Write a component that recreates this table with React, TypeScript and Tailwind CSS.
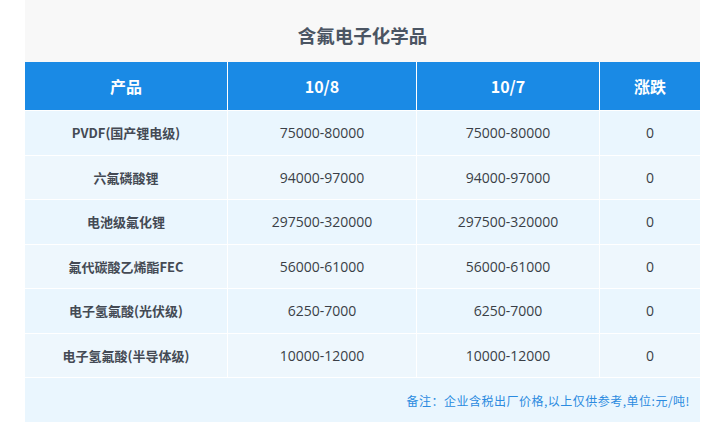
import React from "react";

type Row = { name: string; d1: string; d2: string; change: string };

const rows: Row[] = [
  { name: "PVDF(国产锂电级)", d1: "75000-80000", d2: "75000-80000", change: "0" },
  { name: "六氟磷酸锂", d1: "94000-97000", d2: "94000-97000", change: "0" },
  { name: "电池级氟化锂", d1: "297500-320000", d2: "297500-320000", change: "0" },
  { name: "氟代碳酸乙烯酯FEC", d1: "56000-61000", d2: "56000-61000", change: "0" },
  { name: "电子氢氟酸(光伏级)", d1: "6250-7000", d2: "6250-7000", change: "0" },
  { name: "电子氢氟酸(半导体级)", d1: "10000-12000", d2: "10000-12000", change: "0" },
];

const cols = "grid grid-cols-[202px_1px_188px_1px_182px_1px_100px]";
const numFont = { fontFamily: '"Open Sans", "Noto Sans CJK SC", sans-serif' };

export default function App() {
  return (
    <div
      className="h-[422px] w-[711px] overflow-hidden bg-white pl-[25px]"
      style={{ fontFamily: '"Noto Sans CJK SC", "Noto Sans", sans-serif' }}
    >
      <div className="w-[675px]">
        <div className="flex h-[62px] items-center justify-center bg-[#f8f8f8] pt-[10px]">
          <h1 className="text-[18.5px] font-bold text-[#4b5563]">含氟电子化学品</h1>
        </div>

        <div className={`${cols} h-[48px] bg-[#1a8ae5] text-[16px] font-bold text-white`}>
          <div className="flex items-center justify-center">产品</div>
          <div className="bg-white" />
          <div className="flex items-center justify-center">10/8</div>
          <div className="bg-white" />
          <div className="flex items-center justify-center">10/7</div>
          <div className="bg-white" />
          <div className="flex items-center justify-center">涨跌</div>
        </div>

        {rows.map((row, i) => (
          <div
            className={`${cols} h-[44.5px] border-t border-white text-[#3a3f47] ${i % 2 === 0 ? "bg-[#eaf6fe]" : "bg-[#eef7fd]"}`}
            key={row.name}
          >
            <div className="flex items-center justify-center text-[13px] font-bold text-[#444a54]">{row.name}</div>
            <div className="bg-white" />
            <div className="flex items-center justify-center text-[14px]" style={numFont}>{row.d1}</div>
            <div className="bg-white" />
            <div className="flex items-center justify-center text-[14px]" style={numFont}>{row.d2}</div>
            <div className="bg-white" />
            <div className="flex items-center justify-center text-[14px]" style={numFont}>{row.change}</div>
          </div>
        ))}

        <div className="flex h-[60px] items-start justify-end border-t border-white bg-[#eaf6fe] pr-[10px] pt-[14px]">
          <p className="text-[12px] tracking-[0.5px] text-[#2b8be0]">备注：企业含税出厂价格,以上仅供参考,单位:元/吨!</p>
        </div>
      </div>
    </div>
  );
}
